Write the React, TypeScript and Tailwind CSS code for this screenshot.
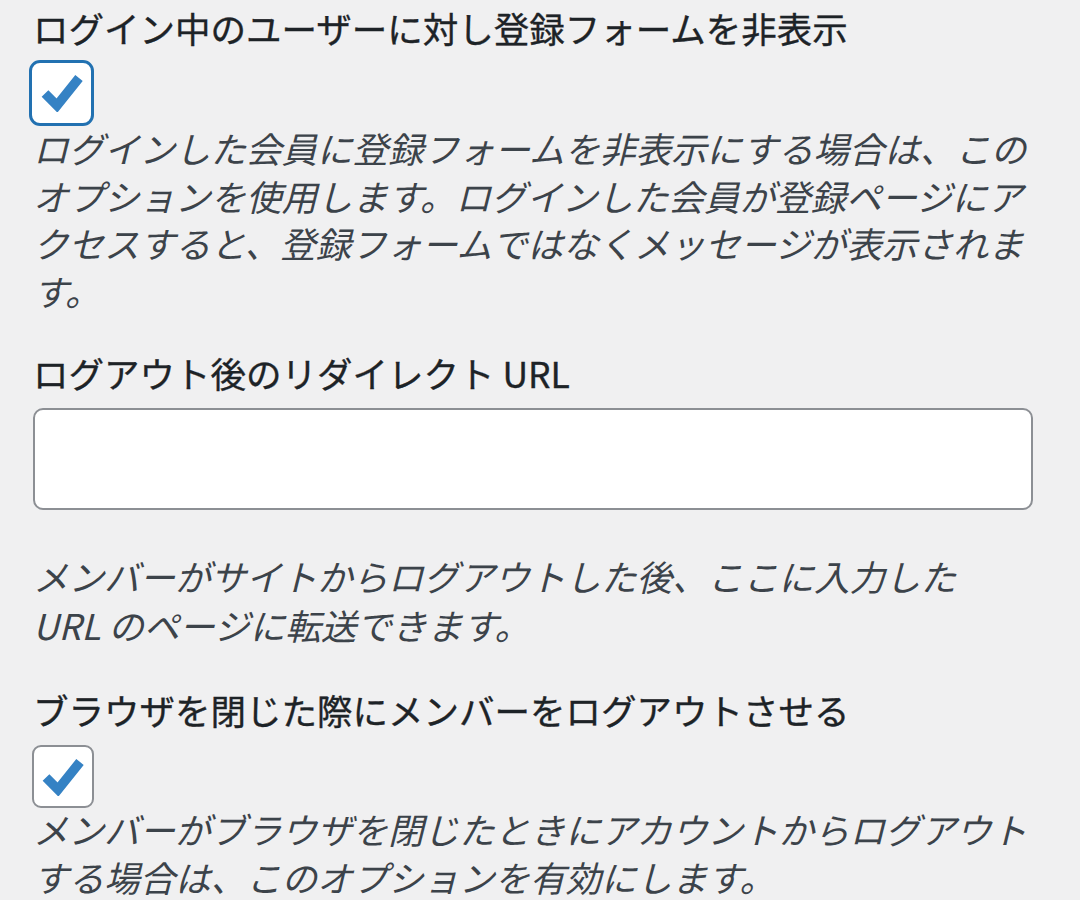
import React from "react";

const font = { fontFamily: '"Noto Sans CJK JP", "Noto Sans", sans-serif' };

function Check() {
  return (
    <svg width="42" height="38" viewBox="0 0 42 38" className="block">
      <path d="M4 19.5 L16 31.5 L38 4" fill="none" stroke="#3582c4" strokeWidth="9.5" strokeLinejoin="miter" />
    </svg>
  );
}

export default function App() {
  return (
    <div className="min-h-screen w-full bg-[#f0f0f1] pl-[33px]" style={font}>
      <div className="w-[1000px] pt-[4px]">
        <div className="text-[35.5px] leading-[48px] font-normal text-[#1d2327] [-webkit-text-stroke:0.35px_#1d2327]">
          ログイン中のユーザーに対し登録フォームを非表示
        </div>
        <div className="mt-[8px] ml-[-4px] w-[65px] h-[66px] rounded-[11px] border-[3px] border-[#2271b1] bg-white flex items-center justify-center">
          <Check />
        </div>
        <p className="italic text-[35.5px] leading-[47.5px] text-[#3c434a] mt-[-2px]">
          ログインした会員に登録フォームを非表示にする場合は、このオプションを使用します。ログインした会員が登録ページにアクセスすると、登録フォームではなくメッセージが表示されます。
        </p>

        <div className="mt-[35px] text-[35.5px] leading-[48px] font-normal text-[#1d2327] [-webkit-text-stroke:0.35px_#1d2327]">
          ログアウト後のリダイレクト URL
        </div>
        <input
          type="text"
          className="mt-[11px] block w-[1000px] h-[102px] rounded-[10px] border-2 border-[#8c8f94] bg-white outline-none"
        />
        <p className="mt-[42px] italic text-[35.5px] leading-[48.5px] text-[#3c434a]">
          メンバーがサイトからログアウトした後、ここに入力した
          <br />
          URL のページに転送できます。
        </p>

        <div className="mt-[37px] text-[35.5px] leading-[48px] font-normal text-[#1d2327] [-webkit-text-stroke:0.35px_#1d2327]">
          ブラウザを閉じた際にメンバーをログアウトさせる
        </div>
        <div className="mt-[11px] ml-[-1px] w-[62px] h-[63px] rounded-[9px] border-2 border-[#8c8f94] bg-white flex items-center justify-center">
          <Check />
        </div>
        <p className="italic text-[35.5px] leading-[48px] text-[#3c434a] mt-[-3px]">
          メンバーがブラウザを閉じたときにアカウントからログアウトする場合は、このオプションを有効にします。
        </p>
      </div>
    </div>
  );
}
